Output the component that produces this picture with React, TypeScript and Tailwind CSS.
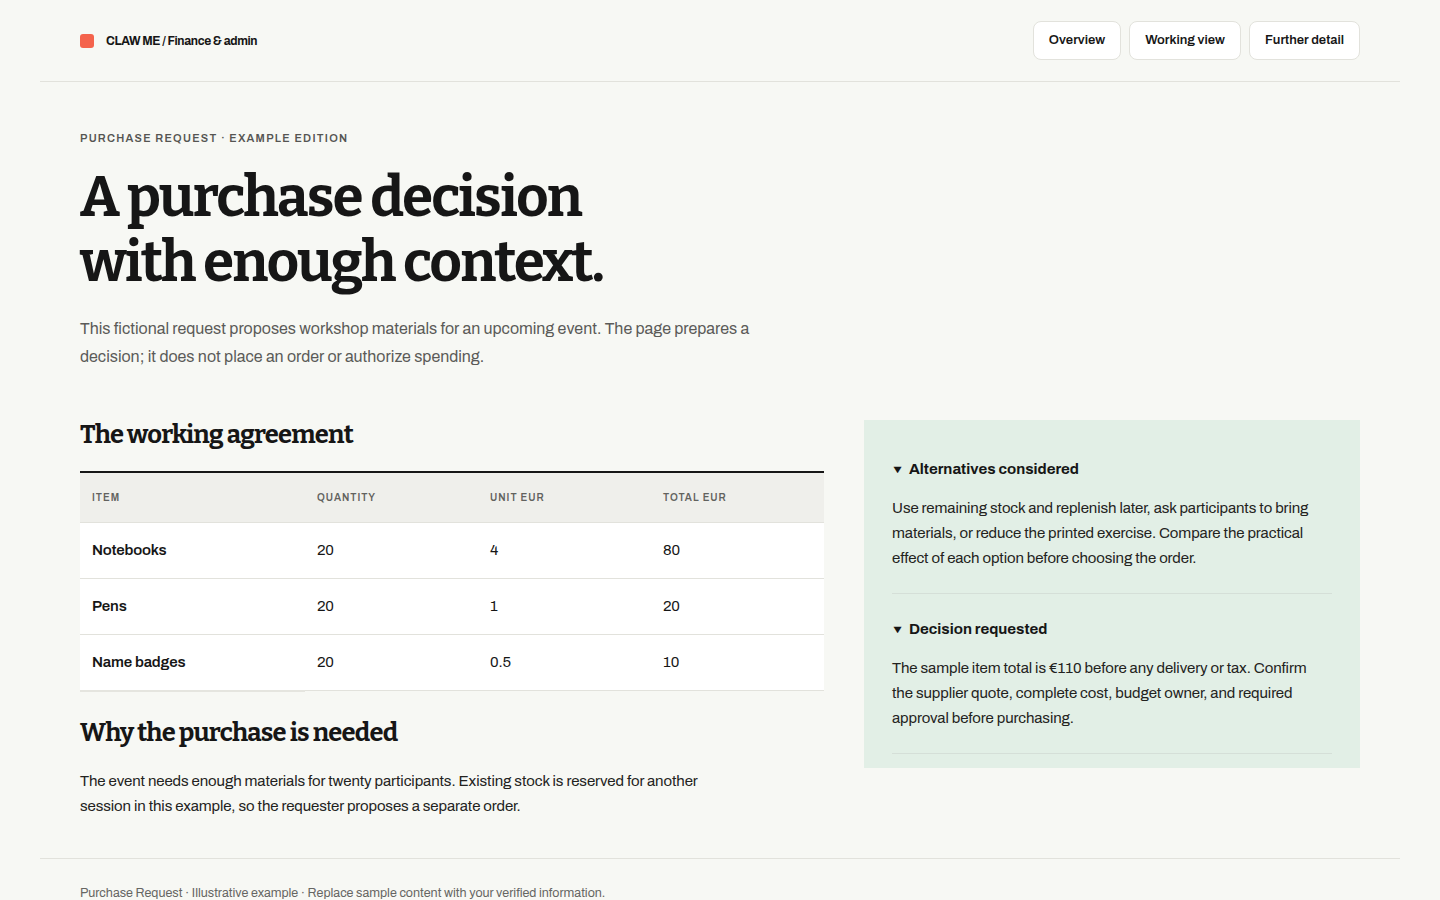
import React from 'react';

const sans = "font-['Archivo','Roboto','Liberation_Sans',sans-serif]";
const serif = "font-['Bitter','DejaVu_Serif',serif]";

const navLinks = ['Overview', 'Working view', 'Further detail'];

const lineItems = [
  { item: 'Notebooks', quantity: '20', unit: '4', total: '80' },
  { item: 'Pens', quantity: '20', unit: '1', total: '20' },
  { item: 'Name badges', quantity: '20', unit: '0.5', total: '10' },
];

const notes = [
  {
    title: 'Alternatives considered',
    body: 'Use remaining stock and replenish later, ask participants to bring materials, or reduce the printed exercise. Compare the practical effect of each option before choosing the order.',
  },
  {
    title: 'Decision requested',
    body: 'The sample item total is €110 before any delivery or tax. Confirm the supplier quote, complete cost, budget owner, and required approval before purchasing.',
  },
];

const App: React.FC = () => {
  return (
    <div className={`min-h-screen bg-[#f7f8f4] text-[#161616] ${sans}`}>
      <div className="mx-10">
        {/* Top bar */}
        <header className="flex items-center justify-between border-b border-[#e2e2dc] px-10 h-[82px]">
          <div className="flex items-center gap-3">
            <span className="h-[14px] w-[14px] rounded-[3px] bg-[#f4634c]" />
            <span className="text-[12px] font-bold tracking-[-0.03em]">CLAW ME / Finance &amp; admin</span>
          </div>
          <nav className="flex items-center gap-2">
            {navLinks.map((link) => (
              <button
                key={link}
                className="h-[39px] rounded-lg border border-[#e2e2dc] bg-white px-[15px] text-[13px] font-semibold"
              >
                {link}
              </button>
            ))}
          </nav>
        </header>

        <main className="px-10 pt-[48px] pb-[39px]">
          {/* Intro */}
          <p className="text-[11px] font-semibold uppercase tracking-[0.115em] text-[#555552]">
            Purchase request · Example edition
          </p>
          <h1 className={`${serif} mt-[18px] text-[56px] font-bold leading-[65px] tracking-[-0.03em]`}>
            A purchase decision
            <br />
            with enough context.
          </h1>
          <p className="mt-[20px] max-w-[700px] text-[16px] leading-[28px] text-[#5b5b58]">
            This fictional request proposes workshop materials for an upcoming event. The page prepares a decision; it
            does not place an order or authorize spending.
          </p>

          <div className="mt-[49px] grid grid-cols-[3fr_2fr] gap-10 items-start">
            <section>
              <h2 className={`${serif} text-[25.5px] font-bold leading-[30px] tracking-[-0.03em]`}>
                The working agreement
              </h2>
              <table className="mt-[21px] w-full table-fixed border-t-2 border-[#161616] text-left">
                <colgroup>
                  <col className="w-[225px]" />
                  <col className="w-[173px]" />
                  <col className="w-[173px]" />
                  <col className="w-[173px]" />
                </colgroup>
                <thead className="bg-[#efefeb]">
                  <tr className="h-[51px] border-b border-[#e2e2dc]">
                    {['Item', 'Quantity', 'Unit EUR', 'Total EUR'].map((h) => (
                      <th
                        key={h}
                        className="px-3 text-[10px] font-semibold uppercase tracking-[0.1em] text-[#62625e]"
                      >
                        {h}
                      </th>
                    ))}
                  </tr>
                </thead>
                <tbody className="bg-white">
                  {lineItems.map((row, i) => (
                    <tr key={row.item} className="h-[56px] border-b border-[#e2e2dc] text-[15px] tracking-[-0.01em]">
                      <th
                        className={`px-3 font-semibold ${
                          i === lineItems.length - 1 ? 'border-b-2 border-[#e5e5df]' : ''
                        }`}
                      >
                        {row.item}
                      </th>
                      <td className="px-3">{row.quantity}</td>
                      <td className="px-3">{row.unit}</td>
                      <td className="px-3">{row.total}</td>
                    </tr>
                  ))}
                </tbody>
              </table>

              <h2 className={`${serif} mt-[26px] text-[25.5px] font-bold leading-[30px] tracking-[-0.03em]`}>
                Why the purchase is needed
              </h2>
              <p className="mt-[21px] max-w-[640px] text-[15px] leading-[25px] tracking-[-0.006em] text-[#222220]">
                The event needs enough materials for twenty participants. Existing stock is reserved for another session
                in this example, so the requester proposes a separate order.
              </p>
            </section>

            {/* Side notes */}
            <aside className="bg-[#e2efe6] px-7 pt-[14px] pb-[14px]">
              {notes.map((note) => (
                <details key={note.title} open className="border-b border-[#d5dfd8] pt-[23px] pb-[22px]">
                  <summary className="flex cursor-pointer list-none items-center text-[15px] font-bold leading-[24px]">
                    <span className="mr-[6px] text-[11px] scale-x-125">▼</span>
                    {note.title}
                  </summary>
                  <p className="mt-[15px] max-w-[434px] text-[15px] leading-[25px] tracking-[-0.006em] text-[#222220]">
                    {note.body}
                  </p>
                </details>
              ))}
            </aside>
          </div>
        </main>

        <footer className="border-t border-[#e2e2dc] px-10 pt-[25px] pb-4">
          <p className="text-[12.5px] text-[#666663]">
            Purchase Request · Illustrative example · Replace sample content with your verified information.
          </p>
        </footer>
      </div>
    </div>
  );
};

export default App;
